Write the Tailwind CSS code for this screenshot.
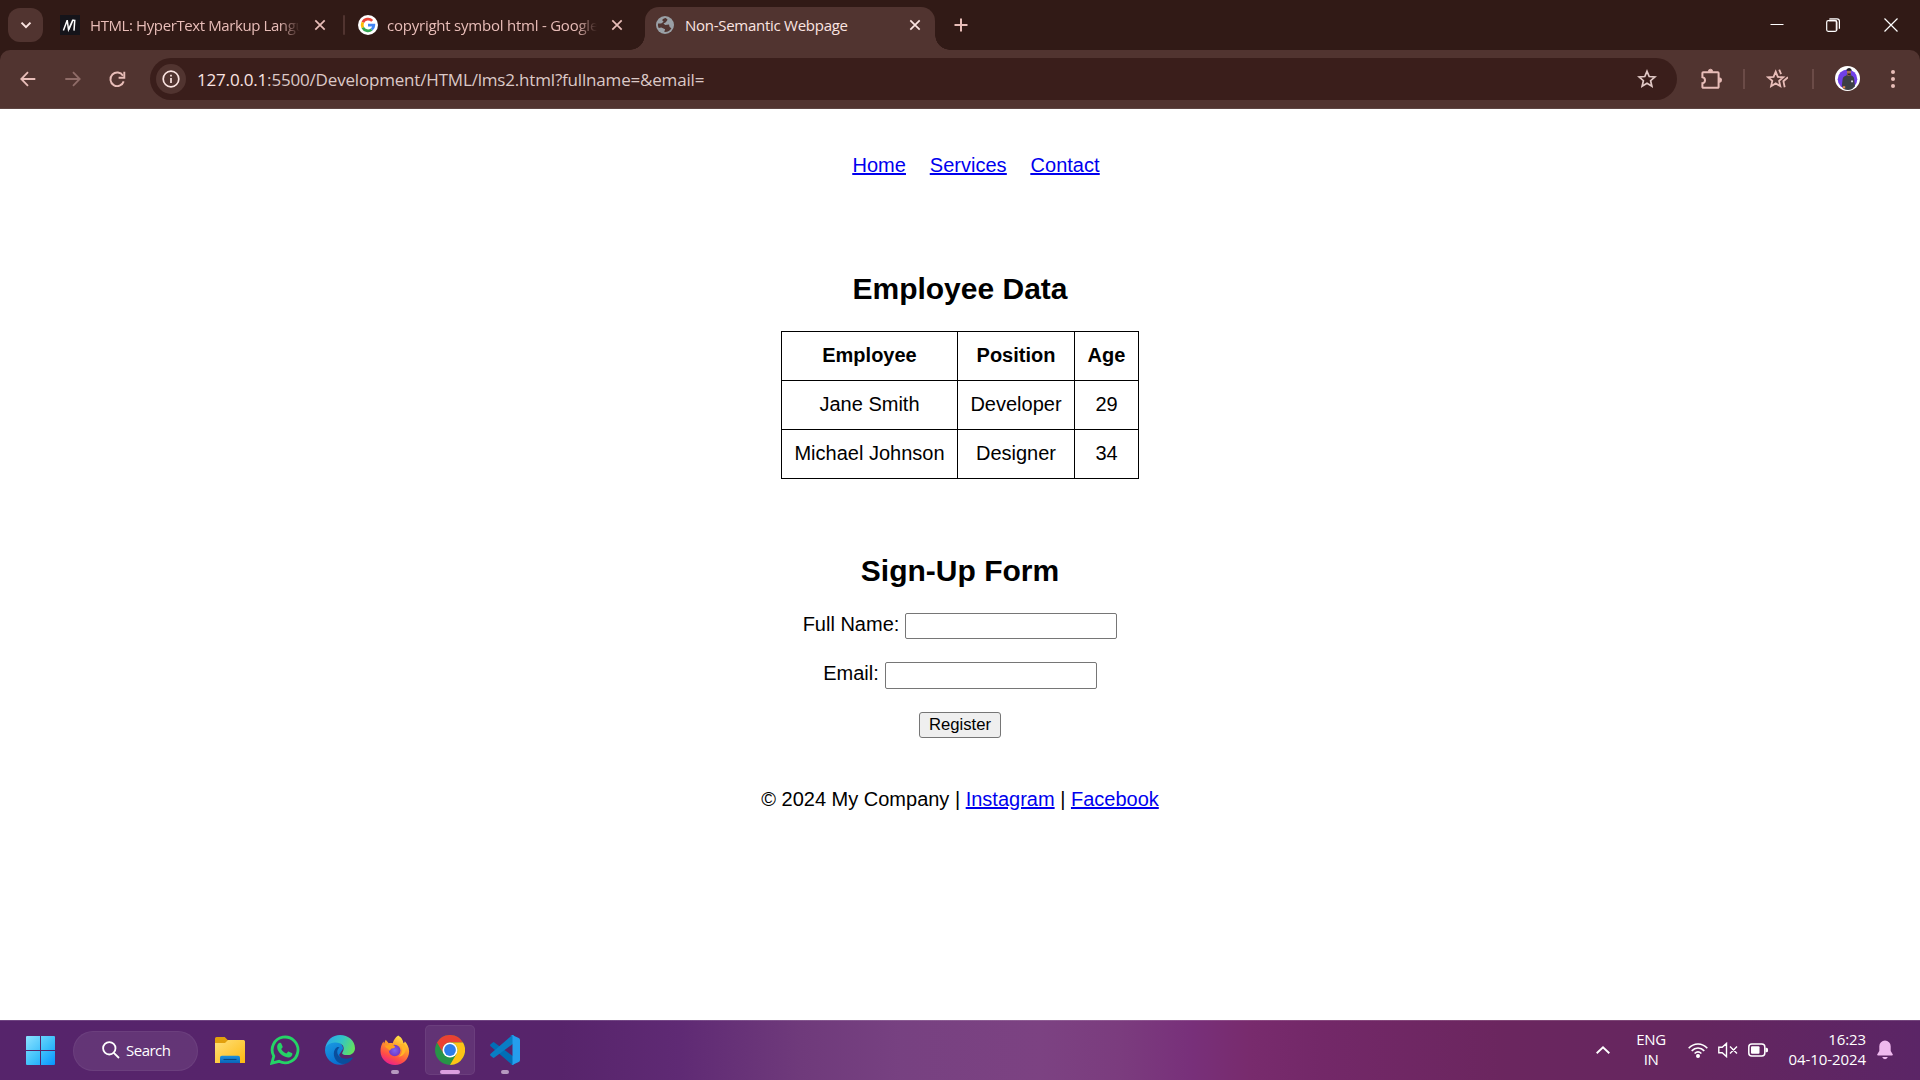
<!DOCTYPE html>
<html lang="en">
<head>
<meta charset="utf-8">
<title>Non-Semantic Webpage</title>
<script src="https://cdn.jsdelivr.net/npm/@tailwindcss/browser@4"></script>
</head>
<body class="flex h-screen w-screen flex-col overflow-hidden bg-white text-black">

<!-- Tab strip -->
<header class="flex h-[50px] shrink-0 items-start bg-[#311a16] pl-2 font-['Open_Sans',sans-serif] text-[15px] text-[#e8bdb8]">
  <button class="mt-2 flex h-[34px] w-[35px] items-center justify-center rounded-xl bg-[#513430]">
    <svg class="size-3" viewBox="0 0 12 12" fill="none" stroke="#fbe4e1" stroke-width="2"><path d="M1.5 3.6 6 8.1l4.5-4.5"/></svg>
  </button>
  <div class="flex h-[50px] w-[302px] items-center pl-[17px]">
    <svg class="size-5 shrink-0" viewBox="0 0 20 20"><path fill="#15141a" d="M0 0h20v20H0z"/><path d="M3.400 15.600 7.200 5.200l1.300 9.400 4.200-9.400 1.600 0M8.800 14.600l4.300-9.800M14.800 4.600l-.8 11" fill="none" stroke="#fff" stroke-width="1.500"/></svg>
    <span class="ml-2.5 w-[210px] whitespace-nowrap tracking-[-0.4px] [mask-image:linear-gradient(to_right,#000_90%,transparent)]">HTML: HyperText Markup Langu</span>
    <svg class="ml-[14px] size-3 shrink-0" viewBox="0 0 12 12" stroke="#e8bdb8" stroke-width="1.7"><path d="m1.3 1.3 9.4 9.4M10.7 1.3l-9.4 9.4"/></svg>
    <span class="ml-auto h-5 w-[2px] shrink-0 rounded bg-[#513430]"></span>
  </div>
  <div class="flex h-[50px] w-[300px] items-center pl-[13px]">
    <svg class="size-5 shrink-0" viewBox="0 0 20 20"><circle cx="10" cy="10" r="10" fill="#fff"/><g fill="none" stroke-width="2.8"><path stroke="#ea4335" d="M14.2 5.9A5.8 5.8 0 0 0 4.8 7.4"/><path stroke="#fbbc05" d="M4.8 7.4a5.8 5.8 0 0 0 0 5.2"/><path stroke="#34a853" d="M4.8 12.6a5.8 5.8 0 0 0 8.9 1.9"/><path stroke="#4285f4" d="M13.7 14.5a5.8 5.8 0 0 0 2.1-4.3H10"/></g></svg>
    <span class="ml-[9px] w-[210px] whitespace-nowrap tracking-[-0.23px] [mask-image:linear-gradient(to_right,#000_90%,transparent)]">copyright symbol html - Google</span>
    <svg class="ml-[14px] size-3 shrink-0" viewBox="0 0 12 12" stroke="#e8bdb8" stroke-width="1.7"><path d="m1.3 1.3 9.4 9.4M10.7 1.3l-9.4 9.4"/></svg>
  </div>
  <div class="relative mt-[7px] flex h-[43px] w-[290px] items-start rounded-t-[14px] bg-[#513430] pt-[9px] pl-[11px] text-[#fbe4e1]">
    <span class="absolute bottom-0 -left-[15px] size-[15px] bg-[radial-gradient(circle_at_0_0,transparent_14.5px,#513430_15px)]"></span>
    <span class="absolute -right-[15px] bottom-0 size-[15px] bg-[radial-gradient(circle_at_100%_0,transparent_14.5px,#513430_15px)]"></span>
    <svg class="size-[18px] shrink-0" viewBox="0 0 18 18"><circle cx="9" cy="9" r="9" fill="#9aa0a6"/><path d="M9.8 2c-1.7.2-3 .9-3.6 2.2L7.6 5.8 5.2 7.6H2.1C1.7 9.2 2 10.5 2.7 12l2.6-.5 3.8 1.7-.8 2.7c3.2.3 5.8-1.2 7.1-3.7l-1.8-1.1-.6-2.6-3.8.4-1.7-1.5 2.3-1.2 1.8-2.4z" fill="#513430"/></svg>
    <span class="-mt-[1px] ml-[11px] flex-1 leading-5 whitespace-nowrap tracking-[-0.27px]">Non-Semantic Webpage</span>
    <svg class="mt-[3px] mr-[14px] size-3 shrink-0" viewBox="0 0 12 12" stroke="#fbe4e1" stroke-width="1.7"><path d="m1.3 1.3 9.4 9.4M10.7 1.3l-9.4 9.4"/></svg>
  </div>
  <svg class="mt-[18px] ml-[19px] size-[14px]" viewBox="0 0 14 14" stroke="#e8bdb8" stroke-width="2"><path d="M7 .5v13M.5 7h13"/></svg>
  <div class="ml-auto flex h-[50px] items-center pr-[22px]">
    <svg class="size-[14px]" viewBox="0 0 14 14" stroke="#fff"><path d="M.5 6.5h13"/></svg>
    <svg class="-mt-px ml-[42px] size-[14px]" viewBox="0 0 14 14" fill="none" stroke="#fff"><path d="M3 2.5h5.5a2 2 0 0 1 2 2v8" stroke="#a88f8c" stroke-width="2"/><rect x=".7" y="2.7" width="10" height="10.6" rx="1.5" stroke-width="1.2"/><path d="M3.400.9H11a2.400 2.400 0 0 1 2.400 2.400v7.400" stroke-width="1.2"/></svg>
    <svg class="-mt-px ml-11 size-[14px]" viewBox="0 0 14 14" stroke="#fff" stroke-width="1.2"><path d="m.5.5 13 13M13.5.5l-13 13"/></svg>
  </div>
</header>

<!-- Toolbar -->
<div class="h-[59px] shrink-0 bg-[#311a16]">
<div class="flex h-full items-center rounded-t-[10px] border-b border-[#5d4542] bg-[#513430] pl-5">
  <svg class="size-4" viewBox="0 0 16 16" fill="none" stroke="#e8bdb8" stroke-width="1.8"><path d="M15.3 8H1.6M8 1.2 1.3 8 8 14.8"/></svg>
  <svg class="ml-[29px] size-4" viewBox="0 0 16 16" fill="none" stroke="#8f6c68" stroke-width="1.8"><path d="M.3 8H14M8 1.2 14.7 8 8 14.8"/></svg>
  <svg class="ml-7 size-[17px]" viewBox="0 0 17 17" fill="none" stroke="#e8bdb8" stroke-width="1.9"><path d="M14.7 10.4A6.8 6.8 0 1 1 14 4.7"/><path d="M15.3.8v6H9.6"/></svg>
  <div class="ml-6 flex h-[42px] w-[1527px] items-center rounded-full bg-[#3a1e1b] pl-1.5">
    <span class="flex size-[30px] items-center justify-center rounded-full bg-[#513430]">
      <svg class="size-[18px]" viewBox="0 0 18 18" fill="none" stroke="#fbe4e1" stroke-width="1.7"><circle cx="9" cy="9" r="7.8"/><path d="M9 8v5M9 4.8v1.8"/></svg>
    </span>
    <span class="ml-[11px] pt-px font-['Open_Sans',sans-serif] text-[17px] tracking-[-0.18px] whitespace-nowrap text-[#dcc9c7]"><span class="text-[#fbe4e1]">127.0.0.1</span>:5500/Development/HTML/lms2.html?fullname=&amp;email=</span>
    <svg class="mr-5 ml-auto size-5" viewBox="0 0 20 20" fill="none" stroke="#e0c8c5" stroke-width="1.7"><path d="m10 2.300 2.200 5.200 5.700.5-4.300 3.700 1.300 5.600-4.900-3-4.900 3 1.300-5.600L2.100 8l5.700-.5z"/></svg>
  </div>
  <svg class="ml-[23px] size-[22px]" viewBox="0 0 22 22" fill="none" stroke="#e8bdb8" stroke-width="2"><path d="M3.200 4.200h14.600a.8.8 0 0 1 .8.8v14a.8.8 0 0 1-.8.8H3.200a.8.8 0 0 1-.8-.8v-3.800c1.500-.2 2.600-1.300 2.600-3s-1.100-2.800-2.600-3V5a.8.8 0 0 1 .8-.8z"/><path d="M8.300 3.400a2.200 2.200 0 0 1 4.400 0zM19.400 9.800a2.300 2.300 0 0 1 0 4.600z" fill="#e8bdb8" stroke="#e8bdb8" stroke-width=".8"/></svg>
  <span class="ml-[21px] h-5 w-[2px] bg-[#6b4b47]"></span>
  <svg class="ml-[21px] size-[22px]" viewBox="0 0 22 22" fill="none" stroke="#e8bdb8" stroke-width="1.8"><path d="m9.700 3.600 2.100 5.200 5.500.5-4.200 3.600 1.200 5.300-4.600-2.800-4.600 2.800 1.200-5.300-4.200-3.600 5.500-.5z"/><path d="m13.200 1.600 1.900 4.600M22 9.200l-4.600 4 1.300 6"/></svg>
  <span class="ml-6 h-5 w-[2px] bg-[#6b4b47]"></span>
  <svg class="-mt-px ml-[21px] size-[25px]" viewBox="0 0 25 25"><circle cx="12.5" cy="12.5" r="12.500" fill="#fff"/><circle cx="12.5" cy="13.2" r="9.800" fill="#7040e8"/><path d="M11.800 8.500 16 8.300l.2 1.200c1.700.5 2.700 1.400 2.900 3.400l.9 7.300-2.800 2.800c-2.800 1.200-5.800 1.200-8.600-.1L6.800 20l.8-6.800c.3-2.100 1.800-3.200 3.900-3.700z" fill="#3c3f45"/><path d="M12 4.400h4v4.400c-.8 1.700-3.200 1.700-4 0z" fill="#a77056"/><path d="M11.400 4.800c.1-3.500 5.100-3.700 5.300-.1z" fill="#20212a"/><path d="M12.200 7.500h3.800c0 2.500-3.400 2.600-3.800 0z" fill="#302527"/><path d="m16.200 14.500 1.700.1v1.600h-1.700z" fill="#eee"/><path d="M7.800 20.200h2.400v2.200H7.800z" fill="#e08a50"/></svg>
  <svg class="ml-[31px] h-5 w-1" viewBox="0 0 4 20" fill="#e8bdb8"><circle cx="2" cy="3" r="2"/><circle cx="2" cy="10" r="2"/><circle cx="2" cy="17" r="2"/></svg>
</div>
</div>

<!-- Page content -->
<main class="flex flex-1 flex-col items-center font-['Liberation_Sans',Arial,sans-serif] text-[20px] leading-[23px]">
  <nav class="mt-[45px] ml-8 flex gap-6 text-[#0000ee] underline">
    <a href="#">Home</a><a href="#">Services</a><a href="#">Contact</a>
  </nav>
  <h2 class="mt-[94px] text-[30px] leading-[35px] font-bold">Employee Data</h2>
  <table class="mt-[25px] border-collapse text-center [&_td]:h-[49px] [&_td]:border [&_td]:border-black [&_td]:pb-0.5 [&_th]:h-[49px] [&_th]:border [&_th]:border-black [&_th]:pb-0.5">
    <tr><th class="w-[176px]">Employee</th><th class="w-[117px]">Position</th><th class="w-[64px]">Age</th></tr>
    <tr><td>Jane Smith</td><td>Developer</td><td>29</td></tr>
    <tr><td>Michael Johnson</td><td>Designer</td><td>34</td></tr>
  </table>
  <h2 class="mt-[74px] text-[30px] leading-[35px] font-bold">Sign-Up Form</h2>
  <form class="mt-[25px] flex flex-col items-center">
    <div class="flex h-[26px] gap-[6px]"><label for="fullname">Full Name:</label><input id="fullname" class="h-[26px] w-[212px] rounded-xs border border-[#767676] bg-white"></div>
    <div class="mt-[23px] flex h-[27px] gap-[6px]"><label for="email">Email:</label><input id="email" class="h-[27px] w-[212px] rounded-xs border border-[#767676] bg-white"></div>
    <button type="button" class="mt-[23px] h-[26px] w-[82px] rounded-[3px] border border-[#767676] bg-[#efefef] text-[16.67px] leading-[22px]">Register</button>
  </form>
  <footer class="mt-[50px]">© 2024 My Company | <a href="#" class="text-[#0000ee] underline">Instagram</a> | <a href="#" class="text-[#0000ee] underline">Facebook</a></footer>
</main>

<!-- Taskbar -->
<div class="flex h-[60px] shrink-0 items-center border-t border-white/15 bg-[linear-gradient(to_right,#56246b_0,#57246b_560px,#5f2a74_680px,#6f3a7b_800px,#774181_900px,#7c4282_1040px,#7b3c7e_1120px,#78307a_1190px,#782b6d_1250px,#732868_1320px,#6b265f_1500px,#64265f_1700px,#5b2566_1920px)] pl-[26px] font-['Open_Sans',sans-serif] text-[15px] text-white">
  <svg class="size-[29px]" viewBox="0 0 29 29"><defs><linearGradient id="win" x1="0" y1="0" x2="1" y2="1"><stop stop-color="#8de2ff"/><stop offset=".55" stop-color="#3dc0fb"/><stop offset="1" stop-color="#0795ff"/></linearGradient></defs><path fill="url(#win)" d="M1 0h13v14H0V1a1 1 0 0 1 1-1zM15 0h13a1 1 0 0 1 1 1v13H15zM0 15h14v14H1a1 1 0 0 1-1-1zM15 15h14v13a1 1 0 0 1-1 1H15z"/></svg>
  <div class="ml-[18px] flex h-10 w-[125px] items-center rounded-full border border-white/5 bg-white/8 pl-7">
    <svg class="-mt-px size-[18px]" viewBox="0 0 18 18" fill="none" stroke="#fff" stroke-width="1.8"><circle cx="7.3" cy="7.3" r="6.200"/><path d="m11.800 11.800 5.200 5.200"/></svg>
    <span class="ml-1.5 tracking-[-0.5px]">Search</span>
  </div>
  <div class="ml-1 flex h-[58px] items-center pb-px">
    <div class="flex w-[55px] justify-center">
      <svg class="h-[26px] w-[30px]" viewBox="0 0 30 26"><defs><linearGradient id="fold" x1="0" y1="0" x2="1" y2="1"><stop stop-color="#ffe07a"/><stop offset="1" stop-color="#fdb90f"/></linearGradient><linearGradient id="tray" x2="0" y2="1"><stop stop-color="#1b91dd"/><stop offset="1" stop-color="#0a64b8"/></linearGradient></defs><path fill="#e2a00c" d="M0 1.500A1.500 1.500 0 0 1 1.500 0h8.200l3 3H29v6H0z"/><path fill="url(#fold)" d="M0 6h10l3-3h15.500A1.500 1.500 0 0 1 30 4.500V26H0z"/><path fill="url(#tray)" d="M5 26v-5.500A1.800 1.800 0 0 1 6.800 18.700h16.400a1.800 1.800 0 0 1 1.800 1.800V26z"/><path stroke="#064783" stroke-width="1.100" d="M8.500 22.500h13"/></svg>
    </div>
    <div class="flex w-[55px] justify-center">
      <svg class="size-[30px]" viewBox="0 0 30 30"><path fill="none" stroke="#25d366" stroke-width="2.800" d="m1.800 28.200 2-7A12.900 12.900 0 1 1 9 26.300z"/><path fill="#25d366" d="M9.200 8.100c.7-.6 1.700-.6 2.100.3l1.300 3.100c.2.500 0 1-.3 1.300L11.200 14c1.200 2.200 2.900 3.700 5.200 4.600l1.400-1.700c.3-.3.700-.4 1.100-.2l2.900 1.400c.6.300.7.700.6 1.200-.3 2.200-2.300 3.500-4.300 3.200-5.700-.9-10.400-5.300-10.900-9.700-.2-2 .4-3.700 2-4.700z"/></svg>
    </div>
    <div class="flex w-[55px] justify-center">
      <svg class="size-[30px]" viewBox="0 0 30 30"><defs><linearGradient id="e1" x1="0" y1=".3" x2="1" y2=".6"><stop stop-color="#2aa6ed"/><stop offset=".5" stop-color="#32c5c6"/><stop offset="1" stop-color="#66e25b"/></linearGradient><linearGradient id="e2" x2=".5" y2="1"><stop stop-color="#1b9de2"/><stop offset="1" stop-color="#096ed0"/></linearGradient></defs><path fill="url(#e2)" d="M0 15c0-5 4.500-8.500 9.500-8.500 5 0 8.600 3.200 8.600 7.200L14 20l6 9.100C9.500 32.300 0 24.700 0 15z"/><path fill="url(#e1)" d="M.3 13C1.500 5.300 7.600 0 15 0c8.300 0 15 5.900 15 13.200 0 4.200-3.300 6.900-7.300 6.900-4.500 0-6.200-1.300-5.300-2.700 3.700-5.700-.8-10.100-7.500-9.900C5.400 7.700 2 9.700.3 13z"/><path fill="#0a4e9c" d="M12.300 12.100c-4.500 3-4.500 9.300-.9 13.600 3.700 4.400 11.200 4.900 16.100-2.300.4-.7-.1-1.100-.8-.8-6.600 2.900-14.800-.2-14.400-6 .1-1.900.9-3.200 2.300-4.100-.6-.5-1.500-.7-2.300-.4z"/></svg>
    </div>
    <div class="relative flex w-[55px] justify-center">
      <svg class="size-[30px]" viewBox="0 0 30 30"><defs><linearGradient id="fx" x1=".8" y1="0" x2=".35" y2="1"><stop stop-color="#fff44f"/><stop offset=".4" stop-color="#ff9e2a"/><stop offset=".75" stop-color="#ff4f45"/><stop offset="1" stop-color="#ec208d"/></linearGradient><radialGradient id="fp"><stop stop-color="#7c64ef"/><stop offset="1" stop-color="#7237c3"/></radialGradient></defs><path fill="url(#fx)" d="M18.200.4c3.900 2.200 5 5.600 5.300 7.900.8-.4 1.200-1.200 1.300-2.100 2.600 2.800 4.300 6.200 4.300 10.300C29.100 24.200 22.700 30 15 30S.5 24.200.5 16.300c0-3.700.9-7.200 3.100-9.700l.4 2.100 1.700-4 3 3.600c1.200-.4 2.700-.4 4 0 .9-3.300 2.600-6 5.500-7.900z"/><circle cx="14.700" cy="15.500" r="5.800" fill="url(#fp)"/><path d="m4.500 10.700 6.400-1.100c2.100 0 3.900 1.100 4.100 2.200 0 1-1.400 1.600-3.200 1.800-1.200.2-1.300 1.700-2.100 2.300-.5-1.700-2.600-2.100-5.200-5.200z" fill="#ffa01e"/><path d="M18.700 9.600c5.200 1.900 4.400 9.800-.4 12.200 6.900-.5 9.900-8.700 5.400-13.300z" fill="#ffb526"/></svg>
      <span class="absolute top-[35px] h-1 w-2 rounded-full bg-[#b69ac0]"></span>
    </div>
    <div class="flex w-[55px] justify-center">
      <div class="relative flex h-[50px] w-[50px] items-center justify-center rounded-[5px] border border-white/6 bg-white/7">
        <svg class="size-[30px]" viewBox="0 0 30 30"><circle cx="15" cy="15" r="15" fill="#279447"/><path fill="#ea4132" d="M2 7.500A15 15 0 0 1 28 7.500H15a7.500 7.500 0 0 0-6.500 11.200z"/><path fill="#fdc316" d="M28 7.500A15 15 0 0 1 15 30l6.500-11.300A7.500 7.500 0 0 0 15 7.500z"/><circle cx="15" cy="15" r="7.500" fill="#fff"/><circle cx="15" cy="15" r="5.900" fill="#2c7de9"/></svg>
        <span class="absolute bottom-0 h-1 w-5 rounded-full bg-[#dc9fe0]"></span>
      </div>
    </div>
    <div class="relative flex w-[55px] justify-center">
      <svg class="size-[30px]" viewBox="0 0 30 30"><path fill="#006eb6" d="M.6 9.300 2.800 7.400q.8-.6 1.600 0L24 22v8h-1.700L.6 11.200q-1-.9 0-1.900z"/><path fill="#087ec5" d="m.6 20.700 2.200 1.900q.8.600 1.600 0L24 8V0h-1.700L.6 18.800q-1 .9 0 1.900z"/><path fill="#259eed" d="M22.200 0 28.700 3q1.300.600 1.300 2v20q0 1.400-1.300 2l-6.500 3q-1 .400-1.800-.400 2.100 1.200 2.100-1.400V1.800Q22.500-.400 20.400.400q.8-.8 1.800-.4z"/></svg>
      <span class="absolute top-[35px] h-1 w-2 rounded-full bg-[#b69ac0]"></span>
    </div>
  </div>
  <div class="ml-auto flex items-center pr-[27px] pb-px">
    <svg class="size-[14px]" viewBox="0 0 14 14" fill="none" stroke="#fff" stroke-width="1.900"><path d="m.7 10.200 6.300-6 6.300 6"/></svg>
    <div class="-mt-0.5 ml-[26px] w-[30px] text-center leading-5 tracking-[-0.4px]">ENG<br>IN</div>
    <svg class="ml-[22px] h-4 w-5" viewBox="0 0 20 16" fill="none" stroke="#fff" stroke-width="1.600"><path d="M.7 6.200c5.200-5.700 13.400-5.700 18.600 0M3.700 8.900c3.600-3.800 9-3.800 12.600 0M6.600 11.500c2-1.900 4.800-1.900 6.800 0"/><circle cx="10" cy="14" r="1.200" fill="#fff"/></svg>
    <svg class="ml-2.5 h-4 w-5" viewBox="0 0 20 16" fill="none" stroke="#fff" stroke-width="1.400"><path d="M.8 5.300h3.400L8.500 1.400v13.200l-4.300-3.900H.8zM12 4.500l7 7M19 4.500l-7 7"/></svg>
    <svg class="ml-2.5 h-4 w-5" viewBox="0 0 20 16"><rect x=".8" y="2" width="16" height="12" rx="3" fill="none" stroke="#fff" stroke-width="1.500"/><rect x="3" y="4.200" width="8.500" height="7.600" rx="1" fill="#fff"/><path fill="#fff" d="M17.500 5.700h1a1.500 1.500 0 0 1 1.500 1.500v1.600a1.500 1.500 0 0 1-1.500 1.500h-1z"/></svg>
    <div class="-mt-0.5 ml-[18px] w-20 text-right leading-5 whitespace-nowrap tracking-[-0.08px]">16:23<br>04-10-2024</div>
    <svg class="ml-[11px] h-5 w-4" viewBox="0 0 16 20" fill="#efb9ee"><path d="M8 .5a5.700 5.700 0 0 1 5.700 5.700V11l2 3.200q.5 1.300-.8 1.300H1.100q-1.300 0-.8-1.300l2-3.200V6.200A5.700 5.700 0 0 1 8 .5z"/><path d="M5.200 17h5.600A2.900 2.900 0 0 1 5.200 17z"/></svg>
  </div>
</div>
</body>
</html>
